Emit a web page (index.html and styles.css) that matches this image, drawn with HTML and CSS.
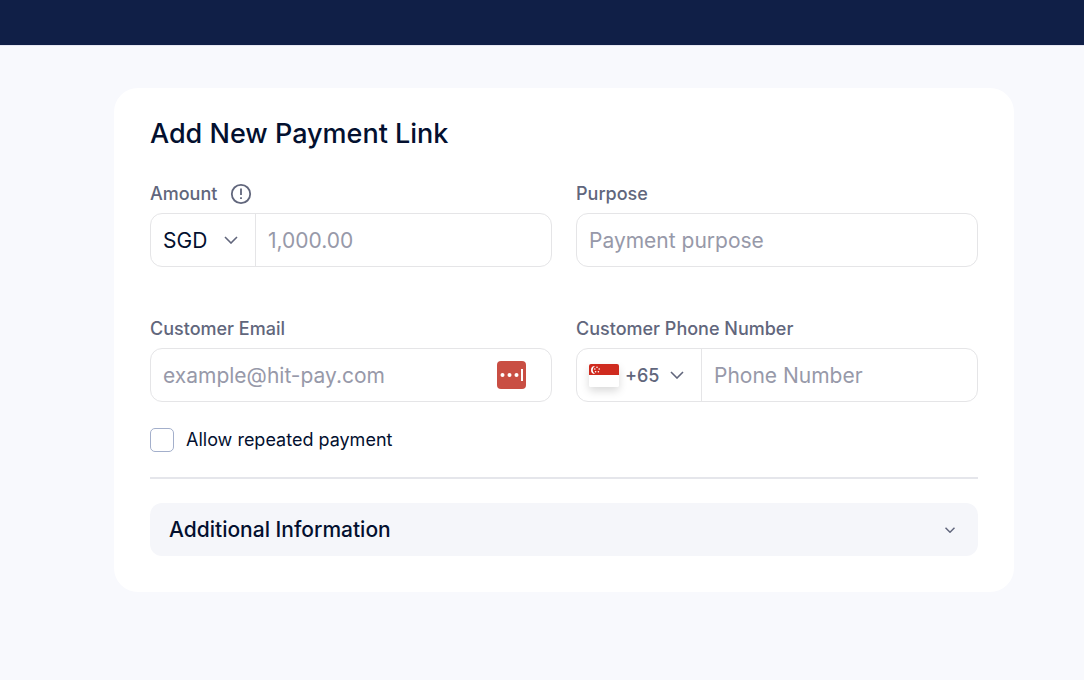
FILE: index.html
```
<!DOCTYPE html>
<html lang="en">
<head>
    <meta charset="UTF-8">
    <meta name="viewport" content="width=device-width, initial-scale=1.0">
    <title>Add New Payment Link</title>
    <link rel="stylesheet" href="styles.css">
</head>
<body>
    <header class="topbar"></header>

    <main class="page">
        <form class="card">
            <h1>Add New Payment Link</h1>

            <div class="form-grid">
                <div class="field">
                    <div class="label-row">
                        <label for="amount">Amount</label>
                        <svg class="info-icon" viewBox="0 0 22 22" stroke-width="1.8" aria-hidden="true">
                            <circle cx="11" cy="11" r="9.2"/>
                            <path d="M11 5.500v6.500M11 14.300v1.800"/>
                        </svg>
                    </div>
                    <div class="input-box">
                        <div class="select-wrap currency">
                            <select id="currency" aria-label="Currency">
                                <option>SGD</option>
                            </select>
                            <svg class="chevron" viewBox="0 0 14 8" stroke-width="1.6" aria-hidden="true"><path d="M1 1l6 6 6-6"/></svg>
                        </div>
                        <input type="text" id="amount" placeholder="1,000.00">
                    </div>
                </div>

                <div class="field">
                    <div class="label-row">
                        <label for="purpose">Purpose</label>
                    </div>
                    <div class="input-box">
                        <input type="text" id="purpose" placeholder="Payment purpose">
                    </div>
                </div>

                <div class="field">
                    <div class="label-row">
                        <label for="email">Customer Email</label>
                    </div>
                    <div class="input-box">
                        <input type="email" id="email" placeholder="example@hit-pay.com">
                        <button type="button" class="password-btn" aria-label="Fill from password manager">
                            <svg viewBox="0 0 29 28" aria-hidden="true">
                                <rect width="29" height="28" rx="4" fill="#c94e43"/>
                                <g fill="#fff">
                                    <circle cx="5.500" cy="14" r="2"/>
                                    <circle cx="12.500" cy="14" r="2"/>
                                    <circle cx="19.500" cy="14" r="2"/>
                                    <rect x="24" y="8" width="2" height="12"/>
                                </g>
                            </svg>
                        </button>
                    </div>
                </div>

                <div class="field">
                    <div class="label-row">
                        <label for="phone">Customer Phone Number</label>
                    </div>
                    <div class="input-box">
                        <div class="select-wrap country">
                            <svg class="flag" viewBox="0 0 30 23" aria-hidden="true">
                                <rect width="30" height="23" fill="#fff"/>
                                <rect width="30" height="11" fill="#cf2b1f"/>
                                <path d="M6 2a4 4 0 1 0 0 8a4.600 4.600 0 0 1 0-8z" fill="#fff"/>
                                <g fill="#fff">
                                    <circle cx="8" cy="3.300" r=".8"/>
                                    <circle cx="10.200" cy="5" r=".8"/>
                                    <circle cx="9.400" cy="7.800" r=".8"/>
                                    <circle cx="6.600" cy="7.800" r=".8"/>
                                    <circle cx="5.800" cy="5" r=".8"/>
                                </g>
                            </svg>
                            <select id="country" aria-label="Country code">
                                <option>+65</option>
                            </select>
                            <svg class="chevron" viewBox="0 0 14 8" stroke-width="1.6" aria-hidden="true"><path d="M1 1l6 6 6-6"/></svg>
                        </div>
                        <input type="tel" id="phone" placeholder="Phone Number">
                    </div>
                </div>
            </div>

            <div class="check-row">
                <input type="checkbox" id="repeated">
                <label for="repeated">Allow repeated payment</label>
            </div>

            <hr>

            <button type="button" class="accordion" aria-expanded="false">
                Additional Information
                <svg class="chevron-small" viewBox="0 0 10 6" stroke-width="1.5" aria-hidden="true"><path d="M.5 .8l4.500 4.400 4.500-4.400"/></svg>
            </button>
        </form>
    </main>
</body>
</html>
```

FILE: styles.css
```
* {
    box-sizing: border-box;
}

body {
    margin: 0;
    font-family: 'Inter', sans-serif;
    font-size: 18px;
    color: #03102f;
    background: #f8f9fd;
}

label {
    padding-bottom: 2px;
}

.topbar {
    height: 46px;
    background: #101f47;
    border-bottom: 1px solid #e6e7f3;
}

.page {
    padding: 42px 70px 42px 114px;
}

.card {
    padding: 28px 36px 36px;
    background: #fff;
    border-radius: 24px;
}

h1 {
    margin: 0 0 30px;
    font-size: 27px;
    font-weight: 500;
    line-height: 36px;
}

.form-grid {
    display: grid;
    grid-template-columns: 1fr 1fr;
    gap: 50px 24px;
}

.field {
    min-width: 0;
}

.label-row {
    display: flex;
    align-items: center;
    gap: 13px;
    height: 24px;
    margin-bottom: 7px;
    font-weight: 500;
    color: #61667c;
}

.info-icon {
    width: 22px;
    height: 22px;
    fill: none;
    stroke: #61667c;
}

.input-box {
    display: flex;
    align-items: center;
    height: 54px;
    border: 1px solid #e5e5e7;
    border-radius: 12px;
    overflow: hidden;
}

.input-box input {
    flex: 1;
    min-width: 0;
    height: 100%;
    padding: 0 12px;
    border: none;
    outline: none;
    background: transparent;
    font: inherit;
    font-size: 21px;
    color: #03102f;
}

.input-box input::placeholder {
    color: #9799a9;
    opacity: 1;
}

.select-wrap {
    display: grid;
    align-items: center;
    height: 100%;
    border-right: 1px solid #e5e5e7;
}

/* select, flag and chevron share one grid cell */
.select-wrap > * {
    grid-area: 1 / 1;
}

.select-wrap select {
    width: 100%;
    height: 100%;
    padding: 0 12px;
    border: none;
    outline: none;
    appearance: none;
    background: transparent;
    font: inherit;
    font-size: 21px;
    color: #03102f;
}

.currency {
    width: 105px;
}

.country {
    width: 125px;
}

.country select {
    padding-left: 48px;
    font-size: 18px;
    font-weight: 500;
    color: #61667c;
}

.chevron {
    justify-self: end;
    width: 14px;
    height: 8px;
    margin-right: 17px;
    fill: none;
    stroke: #61667c;
    pointer-events: none;
}

.flag {
    width: 30px;
    height: 23px;
    margin-left: 12px;
    border-radius: 2px;
    box-shadow: 0 4px 8px rgba(0, 0, 0, 0.15);
    pointer-events: none;
}

.password-btn {
    width: 29px;
    height: 28px;
    margin-right: 25px;
    padding: 0;
    border: none;
    background: none;
    cursor: pointer;
}

.password-btn svg {
    display: block;
}

.check-row {
    display: flex;
    align-items: center;
    gap: 12px;
    margin-top: 26px;
}

.check-row input {
    width: 24px;
    height: 24px;
    margin: 0;
    appearance: none;
    border: 1px solid #a3afcb;
    border-radius: 5px;
    background: #fff;
}

.check-row input:checked {
    background: #101f47;
}

hr {
    height: 2px;
    margin: 25px 0 24px;
    border: none;
    background: #e5e6eb;
}

.accordion {
    display: flex;
    align-items: center;
    justify-content: space-between;
    width: 100%;
    height: 53px;
    padding: 0 23px 0 19px;
    border: none;
    border-radius: 12px;
    background: #f5f6fa;
    font: inherit;
    font-size: 21px;
    font-weight: 500;
    color: #03102f;
    cursor: pointer;
}

.chevron-small {
    width: 10px;
    height: 6px;
    fill: none;
    stroke: #61667c;
}
```
